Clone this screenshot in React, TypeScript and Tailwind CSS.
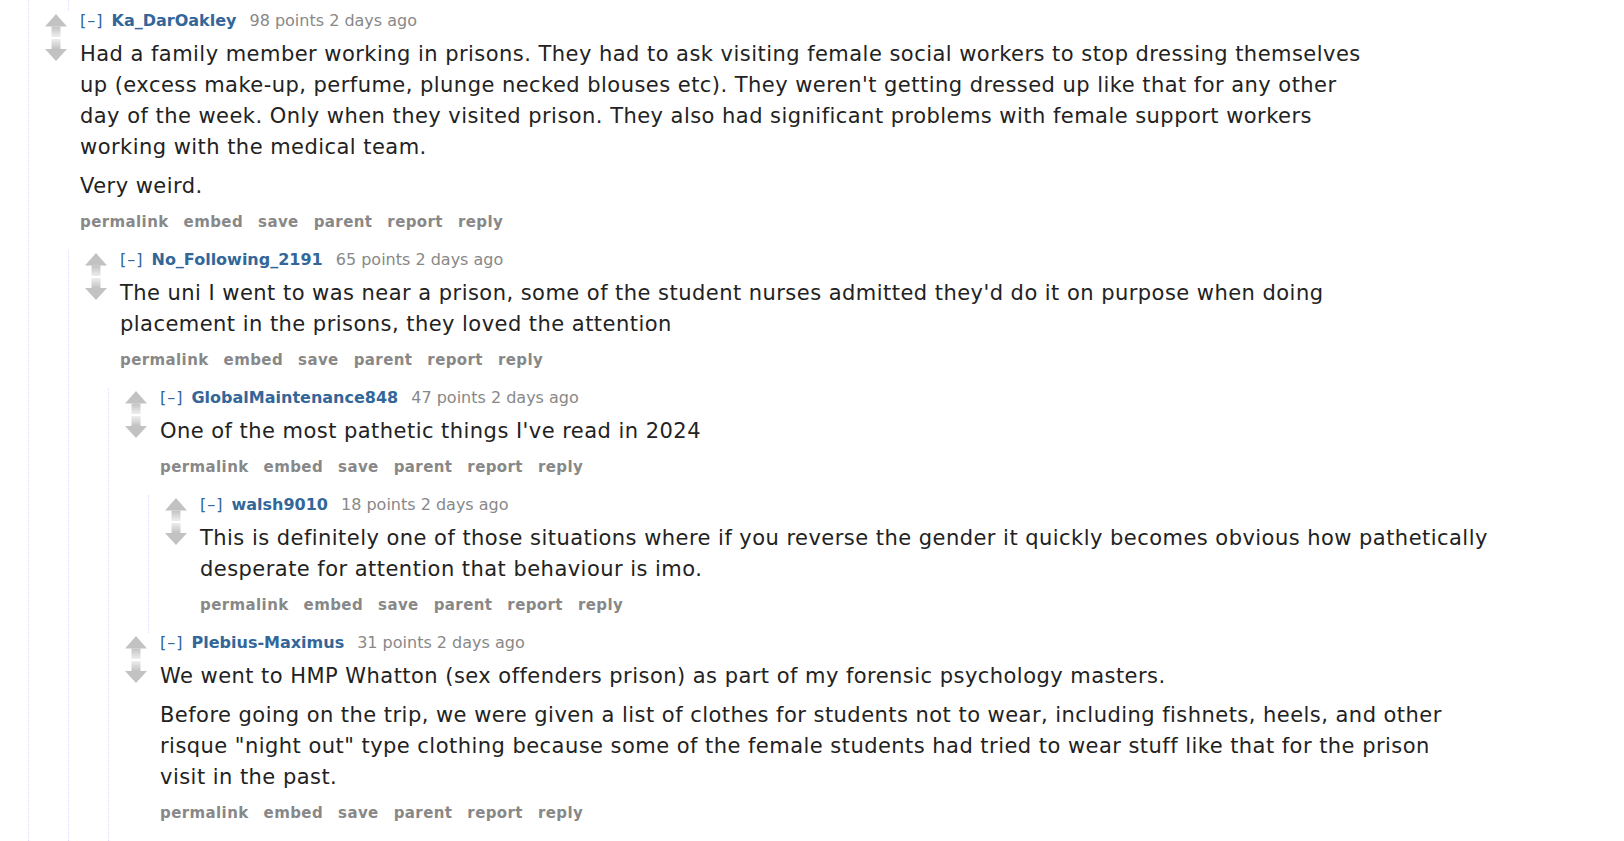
import React from "react";

type C = {
  name: string;
  points: number;
  paras: string[];
  children?: C[];
  stub?: boolean;
};

const data: C = {
  name: "Ka_DarOakley",
  points: 98,
  paras: [
    "Had a family member working in prisons. They had to ask visiting female social workers to stop dressing themselves up (excess make-up, perfume, plunge necked blouses etc). They weren't getting dressed up like that for any other day of the week. Only when they visited prison. They also had significant problems with female support workers working with the medical team.",
    "Very weird.",
  ],
  children: [
    {
      name: "No_Following_2191",
      points: 65,
      paras: [
        "The uni I went to was near a prison, some of the student nurses admitted they'd do it on purpose when doing placement in the prisons, they loved the attention",
      ],
      children: [
        {
          name: "GlobalMaintenance848",
          points: 47,
          paras: ["One of the most pathetic things I've read in 2024"],
          children: [
            {
              name: "walsh9010",
              points: 18,
              paras: [
                "This is definitely one of those situations where if you reverse the gender it quickly becomes obvious how pathetically desperate for attention that behaviour is imo.",
              ],
            },
          ],
        },
        {
          name: "Plebius-Maximus",
          points: 31,
          paras: [
            "We went to HMP Whatton (sex offenders prison) as part of my forensic psychology masters.",
            'Before going on the trip, we were given a list of clothes for students not to wear, including fishnets, heels, and other risque "night out" type clothing because some of the female students had tried to wear stuff like that for the prison visit in the past.',
          ],
          stub: true,
        },
      ],
    },
  ],
};

function UpArrow() {
  return (
    <svg width="22" height="23" viewBox="0 0 22 23" className="block">
      <defs>
        <linearGradient id="upg" x1="0" y1="0" x2="0" y2="1">
          <stop offset="0" stopColor="#c2c2c2" />
          <stop offset="1" stopColor="#eeeeee" />
        </linearGradient>
      </defs>
      <polygon points="11,0 22,12.5 0,12.5" fill="#c2c2c2" />
      <rect x="6.5" y="12.5" width="9" height="10.5" fill="url(#upg)" />
    </svg>
  );
}

function DownArrow() {
  return (
    <svg width="22" height="22" viewBox="0 0 22 22" className="block">
      <defs>
        <linearGradient id="dng" x1="0" y1="0" x2="0" y2="1">
          <stop offset="0" stopColor="#eeeeee" />
          <stop offset="1" stopColor="#c2c2c2" />
        </linearGradient>
      </defs>
      <rect x="6.5" y="0" width="9" height="10" fill="url(#dng)" />
      <polygon points="0,10 22,10 11,22" fill="#c2c2c2" />
    </svg>
  );
}

const buttons = ["permalink", "embed", "save", "parent", "report", "reply"];

function Comment({ c }: { c: C }) {
  return (
    <div>
      <div className="flex">
        <div className="w-[51px] shrink-0 pl-[16px] pt-[2.5px] flex flex-col gap-[2px]">
          <UpArrow />
          <DownArrow />
        </div>
        <div className="min-w-0">
          <div className="text-[16px] leading-[20px] text-[#888] whitespace-nowrap">
            <span className="text-[#369] mr-[8px] tracking-[1px]">[–]</span>
            <span className="font-bold text-[#369] mr-[13px]">{c.name}</span>
            <span>{c.points} points 2 days ago</span>
          </div>
          <div className="mt-[8px] max-w-[1295px] text-[21px] leading-[31px] tracking-[0.46px] text-[#222] flex flex-col gap-[8px]">
            {c.paras.map((p, i) => (
              <p key={i}>{p}</p>
            ))}
          </div>
          <ul className="mt-[8px] mb-[16px] flex gap-[15px] text-[15px] leading-[24px] tracking-[0.4px] font-bold text-[#888]">
            {buttons.map((b) => (
              <li key={b}>{b}</li>
            ))}
          </ul>
        </div>
      </div>
      {c.children && (
        <div className="ml-[39px] border-l border-dotted border-[#ddf]">
          {c.children.map((ch) => (
            <Comment key={ch.name} c={ch} />
          ))}
        </div>
      )}
      {c.stub && <div className="ml-[39px] h-[60px] border-l border-dotted border-[#ddf]" />}
    </div>
  );
}

export default function App() {
  return (
    <div className="min-h-screen bg-white font-['DejaVu_Sans',sans-serif]">
      <div className="ml-[28px] border-l border-dotted border-[#ddf] min-h-screen">
        <div className="ml-[39px] h-[11px] border-l border-dotted border-[#ddf]" />
        <Comment c={data} />
      </div>
    </div>
  );
}
